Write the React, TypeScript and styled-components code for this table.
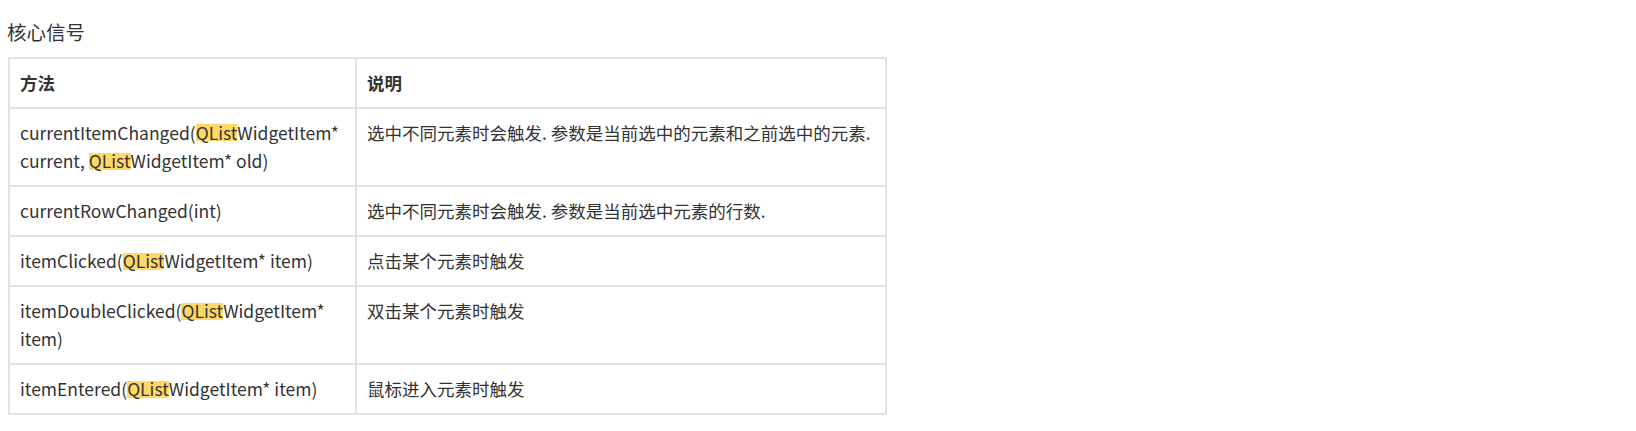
import styled, { createGlobalStyle } from 'styled-components';

const GlobalStyle = createGlobalStyle`
  body {
    margin: 0;
    background: #ffffff;
    color: #333333;
    font-family: "Noto Sans CJK SC", "Noto Sans", sans-serif;
  }
`;

type Part = { text: string; mark?: boolean };

type SignalRow = {
  method: Part[];
  desc: string;
};

const rows: SignalRow[] = [
  {
    method: [
      { text: 'currentItemChanged(' },
      { text: 'QList', mark: true },
      { text: 'WidgetItem* current, ' },
      { text: 'QList', mark: true },
      { text: 'WidgetItem* old)' },
    ],
    desc: '选中不同元素时会触发. 参数是当前选中的元素和之前选中的元素.',
  },
  {
    method: [{ text: 'currentRowChanged(int)' }],
    desc: '选中不同元素时会触发. 参数是当前选中元素的行数.',
  },
  {
    method: [
      { text: 'itemClicked(' },
      { text: 'QList', mark: true },
      { text: 'WidgetItem* item)' },
    ],
    desc: '点击某个元素时触发',
  },
  {
    method: [
      { text: 'itemDoubleClicked(' },
      { text: 'QList', mark: true },
      { text: 'WidgetItem* item)' },
    ],
    desc: '双击某个元素时触发',
  },
  {
    method: [
      { text: 'itemEntered(' },
      { text: 'QList', mark: true },
      { text: 'WidgetItem* item)' },
    ],
    desc: '鼠标进入元素时触发',
  },
];

const App = () => {
  return (
    <StyledPage>
      <GlobalStyle />
      <StyledTitle>核心信号</StyledTitle>
      <StyledTable>
        <colgroup>
          <col style={{ width: 347 }} />
          <col />
        </colgroup>
        <thead>
          <tr>
            <StyledHeadCell>方法</StyledHeadCell>
            <StyledHeadCell>说明</StyledHeadCell>
          </tr>
        </thead>
        <tbody>
          {rows.map((row, i) => (
            <tr key={i}>
              <StyledCell>
                {row.method.map((part, j) =>
                  part.mark ? (
                    <StyledMark key={j}>{part.text}</StyledMark>
                  ) : (
                    <span key={j}>{part.text}</span>
                  )
                )}
              </StyledCell>
              <StyledCell>{row.desc}</StyledCell>
            </tr>
          ))}
        </tbody>
      </StyledTable>
    </StyledPage>
  );
};

const StyledPage = styled.div`
  padding: 18px 8px 16px 7px;
`;

const StyledTitle = styled.div`
  font-size: 19.5px;
  line-height: 28px;
  color: #333333;
  margin-bottom: 11px;
`;

const StyledTable = styled.table`
  border-collapse: collapse;
  width: 879px;
  margin-left: 1px;
  table-layout: fixed;
  font-size: 17.5px;
  line-height: 28px;
  color: #333333;
`;

const StyledHeadCell = styled.th`
  border: 2px solid #e2e2e8;
  padding: 10px 10px;
  text-align: left;
  font-weight: 700;
  vertical-align: top;
`;

const StyledCell = styled.td`
  border: 2px solid #e2e2e8;
  padding: 10px 10px;
  vertical-align: top;
`;

const StyledMark = styled.span`
  background: linear-gradient(
    transparent 18%,
    #ffd866 18%,
    #ffd866 86%,
    transparent 86%
  );
`;

export default App;
